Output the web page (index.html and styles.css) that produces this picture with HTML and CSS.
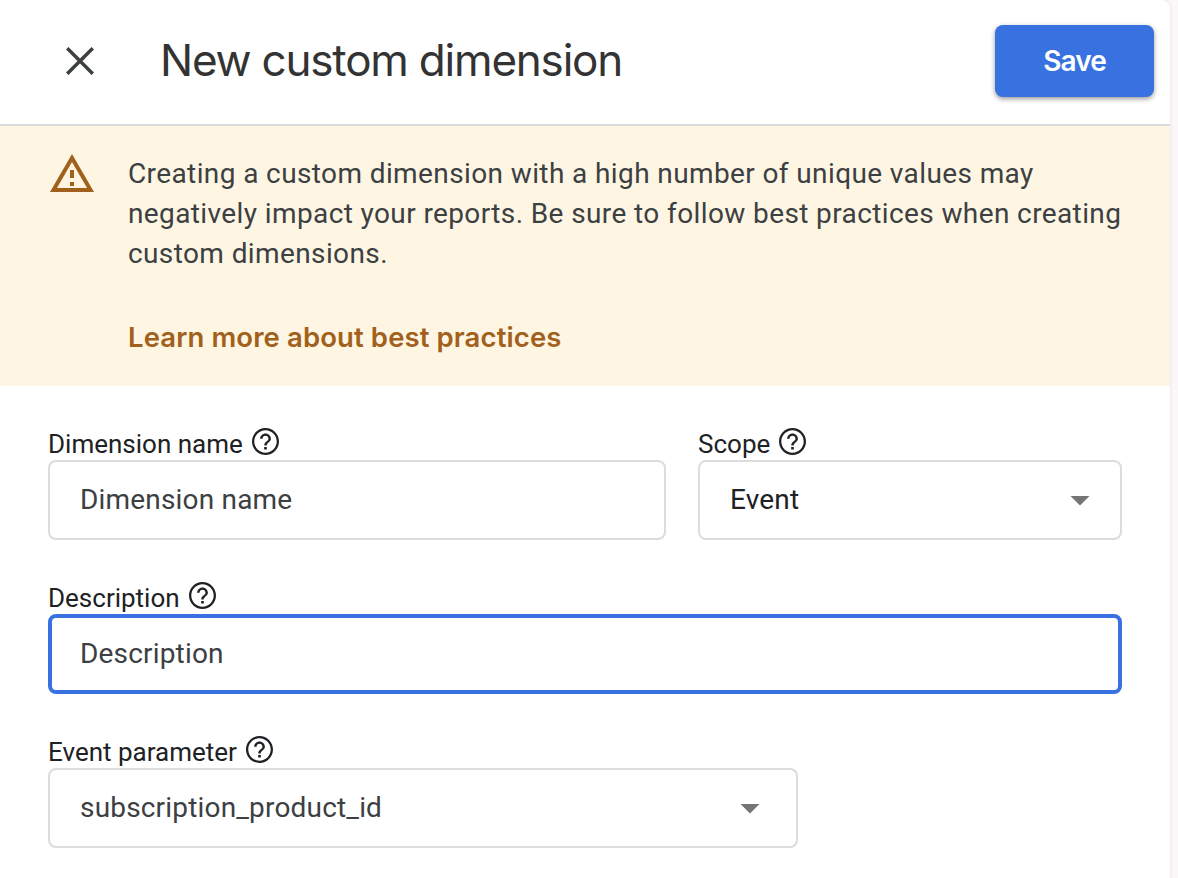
FILE: index.html
```html
<!DOCTYPE html>
<html lang="en">
<head>
<meta charset="utf-8">
<title>New custom dimension</title>
<link rel="stylesheet" href="styles.css">
</head>
<body>
<svg class="defs" width="0" height="0" aria-hidden="true">
  <symbol id="help" viewBox="2 2 20 20">
    <path d="M11 18h2v-2h-2v2zm1-16C6.480 2 2 6.480 2 12s4.480 10 10 10 10-4.480 10-10S17.520 2 12 2zm0 18.300c-4.580 0-8.300-3.720-8.300-8.300S7.420 3.700 12 3.700s8.300 3.720 8.300 8.300-3.720 8.300-8.300 8.300zM12 6c-2.210 0-4 1.790-4 4h1.800c0-1.210.99-2.200 2.200-2.200s2.200.99 2.200 2.200c0 2-3.100 1.750-3.100 5h1.800c0-2.250 3.100-2.500 3.100-5 0-2.210-1.790-4-4-4z"/>
  </symbol>
</svg>
<main class="panel">
  <header class="header">
    <svg class="close" viewBox="0 0 28 28"><path d="M1.200 1.200l25.600 25.600M26.800 1.200L1.200 26.800"/></svg>
    <h1 class="title">New custom dimension</h1>
    <button class="save">Save</button>
  </header>
  <section class="notice">
    <svg class="warning" viewBox="1 2 22 19"><path d="M12 5.990L19.530 19H4.470L12 5.990M12 2L1 21h22L12 2zm1 14h-2v2h2v-2zm0-6h-2v4h2v-4z"/></svg>
    <div class="notice-body">
      <p class="notice-text">Creating a custom dimension with a high number of unique values may<br>negatively impact your reports. Be sure to follow best practices when creating<br>custom dimensions.</p>
      <a class="learn">Learn more about best practices</a>
    </div>
  </section>
  <form class="form">
    <div class="row">
      <div class="field name">
        <div class="label"><span>Dimension name</span><svg class="help"><use href="#help"/></svg></div>
        <div class="box"><span>Dimension name</span></div>
      </div>
      <div class="field scope">
        <div class="label"><span>Scope</span><svg class="help"><use href="#help"/></svg></div>
        <div class="box dark"><span>Event</span><i class="arrow"></i></div>
      </div>
    </div>
    <div class="field">
      <div class="label"><span>Description</span><svg class="help"><use href="#help"/></svg></div>
      <div class="box focused"><span>Description</span></div>
    </div>
    <div class="field param">
      <div class="label"><span>Event parameter</span><svg class="help"><use href="#help"/></svg></div>
      <div class="box"><span>subscription_product_id</span><i class="arrow"></i></div>
    </div>
  </form>
</main>
</body>
</html>
```
FILE: styles.css
```css
* { box-sizing: border-box; }
body {
  margin: 0;
  height: 878px;
  overflow: hidden;
  background: #fbf7f8;
  font-family: Roboto, "Liberation Sans", sans-serif;
}
.defs { display: block; }
.panel {
  width: 1170px;
  height: 878px;
  background: #fff;
  border-top-right-radius: 8px;
  box-shadow: 0 0 3px rgba(0, 0, 0, .12);
}
.header {
  display: flex;
  align-items: center;
  height: 126px;
  padding: 0 16px 2px 66px;
  border-bottom: 2px solid #dadce0;
}
.close {
  width: 28px;
  height: 28px;
  fill: none;
  stroke: #3c4043;
  stroke-width: 3.5;
}
.title {
  margin: -2px auto 0 66px;
  font: 400 44px/56px Inter, sans-serif;
  letter-spacing: -1.2px;
  color: #333;
  white-space: nowrap;
}
.save {
  width: 159px;
  height: 72px;
  border: 0;
  padding: 0;
  border-radius: 8px;
  background: #3871e0;
  color: #fff;
  font: 600 28px/72px Inter, sans-serif;
  letter-spacing: -.9px;
  box-shadow: 0 2px 5px rgba(0, 0, 0, .4);
}
.notice {
  display: flex;
  height: 260px;
  padding: 28px 0 0 50px;
  background: #fef6e2;
}
.warning {
  width: 44px;
  height: 38px;
  margin-right: 34px;
  fill: #a1611d;
}
.notice-text {
  margin: 0;
  font-size: 28px;
  line-height: 40px;
  letter-spacing: .39px;
  color: #3c4043;
  white-space: nowrap;
}
.learn {
  display: inline-block;
  margin-top: 43px;
  font: 600 27.5px/40px Inter, sans-serif;
  letter-spacing: .11px;
  color: #a1611d;
}
.form {
  display: flex;
  flex-direction: column;
  gap: 36px;
  padding: 36px 48px 0;
}
.row { display: flex; gap: 32px; }
.name { width: 618px; }
.scope { width: 424px; }
.field { height: 118px; }
.param { width: 750px; }
.label {
  display: flex;
  align-items: flex-start;
  gap: 9px;
  height: 38px;
  padding-top: 5px;
  font-size: 26px;
  line-height: 34px;
  color: #202124;
  white-space: nowrap;
}
.help { width: 27px; height: 27px; margin-top: 1px; fill: #202124; }
.box {
  display: flex;
  align-items: center;
  justify-content: space-between;
  height: 80px;
  padding: 0 30px 2px;
  border: 2px solid #dadce0;
  border-radius: 8px;
  font-size: 28px;
  letter-spacing: .18px;
  color: #3c4043;
}
.dark { color: #202124; }
.focused { width: 1074px; border: 4px solid #3871e0; padding-left: 28px; }
.arrow {
  width: 20px;
  height: 10px;
  margin-top: 3px;
  background: #757575;
  clip-path: polygon(0 0, 100% 0, 50% 100%);
}
.param .arrow { margin-right: 6px; }
```
